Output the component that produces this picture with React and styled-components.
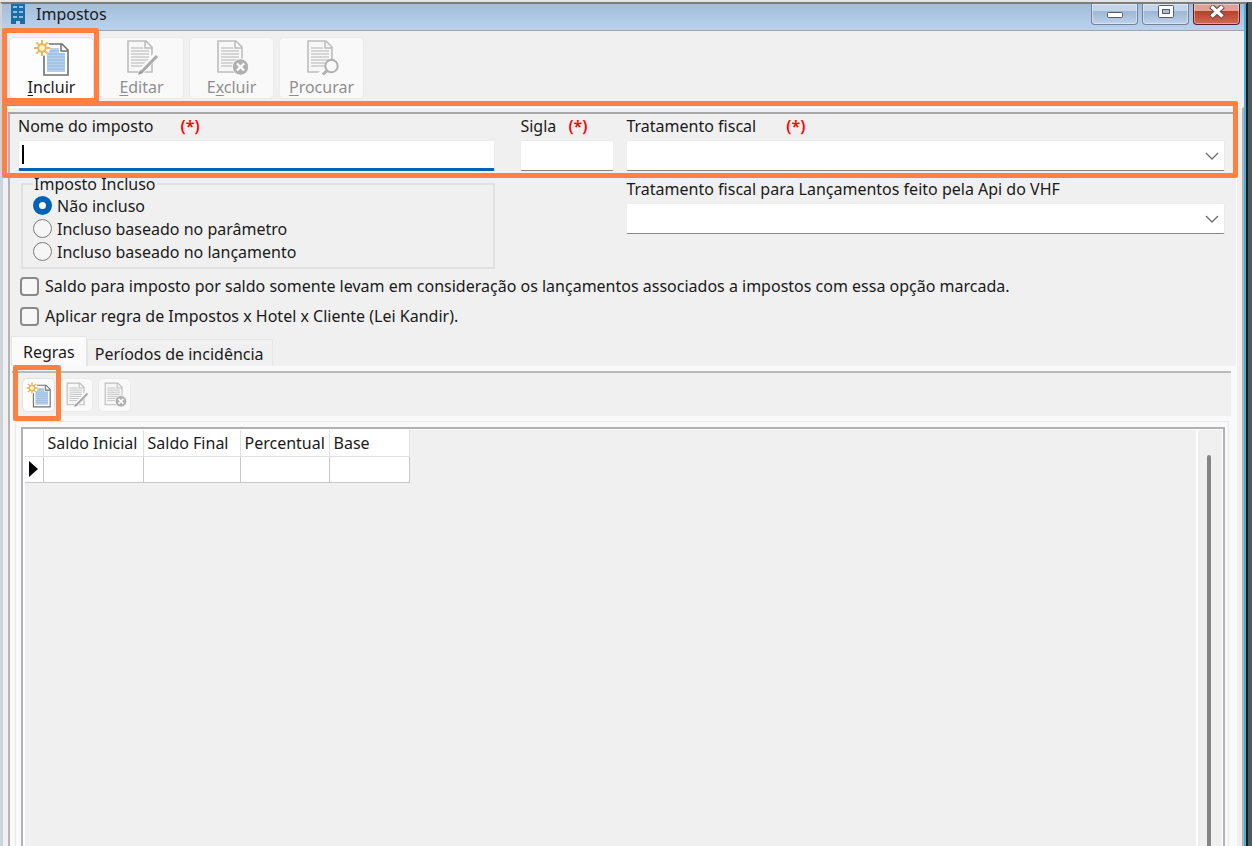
import React from 'react';
import styled, { createGlobalStyle, css } from 'styled-components';

const colors = {
  face: '#f0f0f0',
  mark: '#ff8040',
  accent: '#0063b8',
  text: '#1a1a1a',
  disabled: '#8f8f8f',
};

const DocIcon = ({ kind, size }) => {
  const isNew = kind === 'new';
  const ink = isNew ? '#6f6f6f' : '#bdbdbd';
  const lines = isNew ? '#9dbfe4' : '#c6c6c6';
  const lineRows = [10, 13, 16, 19, 22, 25, 28];
  return (
    <svg width={size} height={size} viewBox="0 0 40 40" fill="none" aria-hidden="true">
      <g transform={isNew ? 'translate(6 3)' : undefined}>
        <path d="M6 3h18l6 6v25H6z" fill={isNew ? '#fff' : '#f7f7f7'} stroke={ink} strokeWidth="1.6" />
        <path d="M23 3v7h7" stroke={ink} strokeWidth="1.5" />
        {isNew && <path d="M12 7h9v5h6v19H9V14z" fill="#b7d0ec" />}
        {lineRows.map(y => (
          <path key={y} d={`M9 ${y}h${y < 12 ? 12 : 18}`} stroke={lines} strokeWidth="1.4" />
        ))}
      </g>
      {isNew && (
        <g>
          <circle cx="10" cy="10" r="8" fill="#fff" />
          <path d="M10 2v16M2 10h16M4.400 4.400l11.200 11.200M15.600 4.400l-11.200 11.200" stroke="#eeb458" strokeWidth="2" />
          <circle cx="10" cy="10" r="3.800" fill="#fff3d8" stroke="#eeb458" strokeWidth="2" />
        </g>
      )}
      {kind === 'edit' && (
        <g>
          <path d="M18 35L33 18" stroke="#fafafa" strokeWidth="6" />
          <path d="M19.500 34L35 18" stroke="#a9a9a9" strokeWidth="3" />
          <path d="M16 37l2-5 3 3z" fill="#999" />
        </g>
      )}
      {kind === 'delete' && (
        <g>
          <circle cx="28.500" cy="29" r="8.200" fill="#b0b0b0" stroke="#fafafa" strokeWidth="1" />
          <path d="M25 25.500l7 7M32 25.500l-7 7" stroke="#fff" strokeWidth="2.400" />
        </g>
      )}
      {kind === 'search' && (
        <g>
          <path d="M24 32l-6 5" stroke="#fafafa" strokeWidth="6" />
          <circle cx="29.500" cy="28" r="6.200" fill="#fafafa" stroke="#b0b0b0" strokeWidth="2" />
          <path d="M25 32.500L21 36.500" stroke="#b0b0b0" strokeWidth="3" />
        </g>
      )}
    </svg>
  );
};

const BuildingIcon = () => (
  <svg width="18" height="20" viewBox="0 0 18 20" aria-hidden="true">
    <path d="M2 0h14v20h-5v-3H7v3H2z" fill="#1b6ea3" />
    <path d="M4 2h4v2H4zM10 2h4v2h-4zM4 7h4v2H4zM10 7h4v2h-4zM4 12h4v2H4zM10 12h4v2h-4z" fill="#8cbfdf" />
  </svg>
);

const Chevron = () => (
  <svg width="14" height="8" viewBox="0 0 14 8" fill="none" aria-hidden="true">
    <path d="M1 1l6 6 6-6" stroke="#6e6e6e" strokeWidth="1.400" />
  </svg>
);

const ToolButton = ({ kind, label, disabled }) => (
  <BigButton type="button" disabled={disabled}>
    <DocIcon kind={kind} size={40} />
    <span>{label}</span>
  </BigButton>
);

const Combo = ({ id }) => (
  <ComboBox>
    <select id={id} defaultValue="">
      <option value=""></option>
    </select>
    <Chevron />
  </ComboBox>
);

const App = () => {
  return (
    <Desktop>
      <GlobalStyle />
      <Window>
        <TitleBar>
          <BuildingIcon />
          <h1>Impostos</h1>
          <WindowButtons>
            <WindowButton type="button" aria-label="Minimizar">
              <svg width="18" height="16" viewBox="0 0 18 16"><rect x="1.500" y="7.500" width="15" height="5" rx="1" fill="#fff" stroke="#555b6b" /></svg>
            </WindowButton>
            <WindowButton type="button" aria-label="Restaurar">
              <svg width="18" height="16" viewBox="0 0 18 16">
                <rect x="1.500" y="0.500" width="15" height="12" rx="1" fill="#fff" stroke="#555b6b" />
                <rect x="5.500" y="4.500" width="7" height="4" fill="#a9bdd6" stroke="#555b6b" />
              </svg>
            </WindowButton>
            <WindowButton type="button" aria-label="Fechar" $close>
              <svg width="18" height="16" viewBox="0 0 18 16">
                <path d="M3 1l12 11M15 1L3 12" stroke="#5b4550" strokeWidth="5.500" />
                <path d="M3.500 1.500l11 10M14.500 1.500l-11 10" stroke="#fff" strokeWidth="3.500" />
              </svg>
            </WindowButton>
          </WindowButtons>
        </TitleBar>

        <Toolbar>
          <Marked $space="9px 5px 4px 7px">
            <ToolButton kind="new" label={<><u>I</u>ncluir</>} />
          </Marked>
          <ToolButton kind="edit" label={<><u>E</u>ditar</>} disabled />
          <ToolButton kind="delete" label={<>E<u>x</u>cluir</>} disabled />
          <ToolButton kind="search" label={<><u>P</u>rocurar</>} disabled />
        </Toolbar>

        <Frame>
          <Form>
            <Marked $space="15px 13px 7px 16px">
              <Columns>
                <Field $wide>
                  <Label htmlFor="nome">Nome do imposto <Required $gap="23px">(*)</Required></Label>
                  <TextWrap>
                    <TextBox id="nome" type="text" $active />
                    <Caret />
                  </TextWrap>
                </Field>
                <Field>
                  <Label htmlFor="sigla">Sigla <Required $gap="8px">(*)</Required></Label>
                  <TextBox id="sigla" type="text" />
                </Field>
                <Field>
                  <Label htmlFor="tratamento">Tratamento fiscal <Required $gap="26px">(*)</Required></Label>
                  <Combo id="tratamento" />
                </Field>
              </Columns>
            </Marked>

            <Columns>
              <Included>
                <legend>Imposto Incluso</legend>
                <Option><input type="radio" name="incluso" defaultChecked />Não incluso</Option>
                <Option><input type="radio" name="incluso" />Incluso baseado no parâmetro</Option>
                <Option><input type="radio" name="incluso" />Incluso baseado no lançamento</Option>
              </Included>
              <ApiField>
                <Label htmlFor="tratamento-api">Tratamento fiscal para Lançamentos feito pela Api do VHF</Label>
                <Combo id="tratamento-api" />
              </ApiField>
            </Columns>

            <Checks>
              <Check>
                <input type="checkbox" />
                Saldo para imposto por saldo somente levam em consideração os lançamentos associados a impostos com essa opção marcada.
              </Check>
              <Check>
                <input type="checkbox" />
                Aplicar regra de Impostos x Hotel x Cliente (Lei Kandir).
              </Check>
            </Checks>
          </Form>

          <Tabs role="tablist">
            <Tab type="button" role="tab" aria-selected="true" $active>Regras</Tab>
            <Tab type="button" role="tab" aria-selected="false">Períodos de incidência</Tab>
          </Tabs>

          <TabPanel>
            <RuleBar>
              <Marked $space="13px 6px 9px 9px">
                <SmallButton type="button" aria-label="Incluir regra"><DocIcon kind="new" size={28} /></SmallButton>
              </Marked>
              <SmallButton type="button" aria-label="Editar regra" disabled><DocIcon kind="edit" size={28} /></SmallButton>
              <SmallButton type="button" aria-label="Excluir regra" disabled><DocIcon kind="delete" size={28} /></SmallButton>
            </RuleBar>
            <GridFrame>
              <GridBox>
                <GridArea>
                  <RuleTable>
                    <colgroup>
                      <col width="18" />
                      <col width="100" />
                      <col width="97" />
                      <col width="89" />
                      <col width="80" />
                    </colgroup>
                    <thead>
                      <tr>
                        <th></th>
                        <th>Saldo Inicial</th>
                        <th>Saldo Final</th>
                        <th>Percentual</th>
                        <th>Base</th>
                      </tr>
                    </thead>
                    <tbody>
                      <tr>
                        <td><svg width="9" height="16" viewBox="0 0 9 16"><path d="M0 0l9 8-9 8z" fill="#000" /></svg></td>
                        <td></td>
                        <td></td>
                        <td></td>
                        <td></td>
                      </tr>
                    </tbody>
                  </RuleTable>
                </GridArea>
                <ScrollTrack><ScrollThumb /></ScrollTrack>
              </GridBox>
            </GridFrame>
          </TabPanel>
        </Frame>
      </Window>
    </Desktop>
  );
};

export default App;

const GlobalStyle = createGlobalStyle`
  * {
    box-sizing: border-box;
  }

  body {
    margin: 0;
    background: #4a5a61;
    color: ${colors.text};
    font-family: "Noto Sans", "Open Sans", sans-serif;
    font-size: 16px;
    line-height: 20px;
  }

  button, input, select {
    font: inherit;
    color: inherit;
    margin: 0;
  }
`;

const Desktop = styled.div`
  display: flex;
  flex-direction: column;
  min-height: 100vh;
  padding-right: 4px;
  border-top: 2px solid #e4e4e4;
  background: #4a5a61;
`;

const Window = styled.main`
  flex: 1;
  display: flex;
  flex-direction: column;
  background: ${colors.face};
  border-top: 2px solid #7c7c7c;
  border-left: 2px solid #d3d3d3;
  border-right: 2px solid #1c1c1c;
  box-shadow: inset 1px 0 #bcd7f1, inset -2px 0 #3fb2de;
`;

const TitleBar = styled.header`
  display: flex;
  align-items: flex-start;
  height: 27px;
  padding-left: 7px;
  margin-right: 2px;
  background: linear-gradient(#a3bddb, #bad2ec);
  border-bottom: 1px solid #a0a4a8;

  h1 {
    flex: 1;
    margin: 0 0 0 9px;
    font-size: 16px;
    font-weight: 400;
  }
`;

const WindowButtons = styled.div`
  display: flex;
  gap: 4px;
  padding-right: 4px;
`;

const WindowButton = styled.button`
  display: flex;
  justify-content: center;
  width: 47px;
  height: 21px;
  padding: 1px 0 0;
  border: 1px solid ${props => (props.$close ? '#5a1f26' : '#72839b')};
  border-top: 0;
  border-radius: 0 0 4px 4px;
  background: ${props =>
    props.$close
      ? 'linear-gradient(#e0a296 0 35%, #b8402b 36%, #cf6a52)'
      : 'linear-gradient(#c3d5ea 0 35%, #9db5d1 36%, #bed3ea)'};
  box-shadow: inset 0 0 0 1px rgba(255, 255, 255, 0.4);
`;

const Toolbar = styled.div`
  display: flex;
  gap: 5px;
  padding: 6px 7px 8px;
`;

/* orange callout drawn around the wrapped controls */
const Marked = styled.div`
  position: relative;

  &::after {
    content: '';
    position: absolute;
    z-index: 2;
    inset: ${props => props.$space.split(' ').map(side => `-${side}`).join(' ')};
    border: 5px solid ${colors.mark};
    border-radius: 2px;
    pointer-events: none;
  }
`;

const buttonFace = css`
  background: #fdfdfd;
  border: 1px solid #e2e2e2;
  border-radius: 5px;

  &:disabled {
    color: ${colors.disabled};
    background: #f9f9f9;
    border-color: #ebebeb;
  }
`;

const BigButton = styled.button`
  ${buttonFace}
  display: flex;
  flex-direction: column;
  align-items: center;
  width: 85px;
  height: 62px;
  padding: 0;

  span {
    line-height: 18px;
  }

  u {
    text-underline-offset: 2px;
  }
`;

const Frame = styled.div`
  flex: 1;
  display: flex;
  flex-direction: column;
  margin: 0 2px 0 5px;
  padding-top: 4px;
  border-top: 1px solid #fff;
  border-right: 2px solid #b4b4b4;
  box-shadow: inset -5px 0 ${colors.face}, inset -6px 0 #fff;
`;

const Form = styled.div`
  margin: 0 6px 0 1px;
  padding: 2px 11px 0 8px;
  border-top: 2px solid #a6a6a6;
  border-left: 2px solid #b4b4b4;
`;

const Columns = styled.div`
  display: grid;
  grid-template-columns: 490fr 94fr 598fr;
  column-gap: 12px;
`;

const Field = styled.div`
  min-width: 0;
  padding-right: ${props => (props.$wide ? '13px' : '0')};
`;

const Label = styled.label`
  display: block;
  height: 24px;
  white-space: nowrap;
`;

const Required = styled.span`
  margin-left: ${props => props.$gap};
  color: #f00;
  font-weight: 600;
`;

const TextWrap = styled.div`
  position: relative;
`;

const TextBox = styled.input`
  display: block;
  width: 100%;
  height: 31px;
  padding: 0 4px;
  background: #fff;
  border: 1px solid #ececec;
  border-bottom: ${props => (props.$active ? `3px solid ${colors.accent}` : '1px solid #868686')};
  border-radius: 2px;
  outline: 0;
`;

const Caret = styled.span`
  position: absolute;
  left: 4px;
  top: 5px;
  width: 2px;
  height: 19px;
  background: #000;
`;

const ComboBox = styled.div`
  position: relative;

  select {
    display: block;
    appearance: none;
    width: 100%;
    height: 31px;
    padding: 0 24px 0 4px;
    background: #fff;
    border: 1px solid #ececec;
    border-bottom: 1px solid #868686;
    border-radius: 2px;
    outline: 0;
  }

  svg {
    position: absolute;
    right: 6px;
    top: 12px;
    pointer-events: none;
  }
`;

const Included = styled.fieldset`
  grid-column: 1;
  min-width: 0;
  margin: 3px 13px 0 3px;
  padding: 0 10px 4px;
  border: 2px solid #e0e0e0;

  legend {
    padding: 0 1px;
    line-height: 20px;
  }
`;

const Option = styled.label`
  display: flex;
  align-items: center;
  gap: 5px;
  height: 23px;

  input {
    appearance: none;
    width: 19px;
    height: 19px;
    border: 1px solid #7d7d7d;
    border-radius: 50%;
    background: #f6f6f6;
  }

  input:checked {
    border: 6px solid ${colors.accent};
    background: #fff;
  }
`;

const ApiField = styled.div`
  grid-column: 3;
  min-width: 0;
  padding-top: 8px;
`;

const Checks = styled.div`
  padding-top: 2px;
`;

const Check = styled.label`
  display: flex;
  align-items: center;
  gap: 6px;
  height: 30px;
  padding-left: 2px;
  white-space: nowrap;

  input {
    appearance: none;
    width: 19px;
    height: 19px;
    border: 2px solid #8a8a8a;
    border-radius: 4px;
    background: #f7f7f7;
  }
`;

const Tabs = styled.div`
  display: flex;
  align-items: flex-end;
  margin: 0 6px 0 1px;
  padding: 5px 0 0 1px;
  border-left: 2px solid #b4b4b4;
`;

const Tab = styled.button`
  height: ${props => (props.$active ? '30px' : '27px')};
  padding: ${props => (props.$active ? '0 11px' : '1px 8px 0 7px')};
  background: ${props => (props.$active ? '#fafafa' : colors.face)};
  border: 1px solid #e6e6e6;
  border-bottom: 0;
`;

const TabPanel = styled.section`
  flex: 1;
  display: flex;
  flex-direction: column;
  margin: 0 6px 0 1px;
  padding: 5px 7px 0 2px;
  border-left: 2px solid #b4b4b4;
  background: #f9f9f9;
`;

const RuleBar = styled.div`
  display: flex;
  gap: 5px;
  margin-right: -2px;
  padding: 5px 10px 4px;
  background: ${colors.face};
  border-top: 2px solid #b9b9b9;
`;

const SmallButton = styled.button`
  ${buttonFace}
  display: flex;
  align-items: center;
  justify-content: center;
  width: 33px;
  height: 34px;
  padding: 0;
`;

const GridFrame = styled.div`
  flex: 1;
  display: flex;
  margin: 5px 0 0 3px;
  padding: 5px 3px 0 5px;
  border: 1px solid #e8e8e8;
  border-bottom: 0;
`;

const GridBox = styled.div`
  flex: 1;
  display: flex;
  padding: 1px 1px 0 2px;
  background: #fff;
  border: 2px solid #b0b0b6;
  border-bottom: 0;
`;

const GridArea = styled.div`
  flex: 1;
  background: ${colors.face};
`;

const RuleTable = styled.table`
  table-layout: fixed;
  width: 384px;
  border-collapse: collapse;
  background: #fff;

  th, td {
    height: 26px;
    padding: 0 0 0 4px;
    border-right: 1px solid #c8c8c8;
    border-bottom: 1px solid #c8c8c8;
    font-weight: 400;
    text-align: left;
    white-space: nowrap;
  }

  th {
    border-color: #e0e0e0;
  }

  svg {
    display: block;
  }
`;

const ScrollTrack = styled.div`
  display: flex;
  width: 26px;
  padding: 25px 0 0 9px;
  background: ${colors.face};
  border-left: 2px solid #fff;
`;

const ScrollThumb = styled.div`
  width: 4px;
  background: #858585;
  border-radius: 2px 2px 0 0;
`;
